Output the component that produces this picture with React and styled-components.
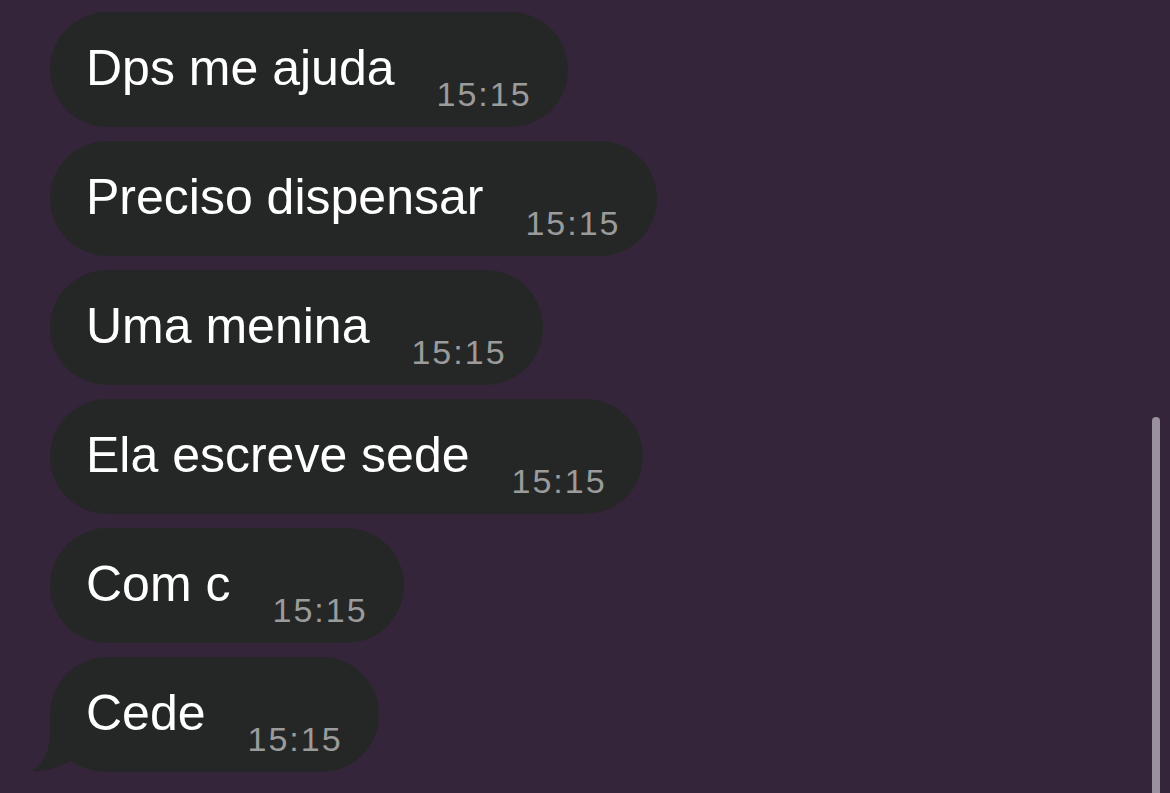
import React from 'react'
import styled, { createGlobalStyle } from 'styled-components'

const GlobalStyle = createGlobalStyle`
  html, body {
    margin: 0;
    padding: 0;
    background: #35253a;
    overflow: hidden;
  }
  body {
    font-family: "Liberation Sans", Arial, sans-serif;
  }
`

const messages = [
  'Dps me ajuda',
  'Preciso dispensar',
  'Uma menina',
  'Ela escreve sede',
  'Com c',
  'Cede',
]

const Chat = () => (
  <Screen>
    <GlobalStyle />
    <Thread>
      {messages.map((text, i) => (
        <Bubble key={i} $last={i === messages.length - 1}>
          <Text>{text}</Text>
          <Time>15:15</Time>
          {i === messages.length - 1 && (
            <Tail viewBox="0 0 80 60" width="80" height="60">
              <path d="M20 0 L20 22 C20 40 12 52 2 59 C16 60 30 55 40 49 C50 55 60 59 80 60 L80 0 Z" fill="#252727" />
            </Tail>
          )}
        </Bubble>
      ))}
    </Thread>
    <Scrollbar />
  </Screen>
)

const Screen = styled.main`
  position: relative;
  width: 1170px;
  height: 793px;
  background: #35253a;
  overflow: hidden;
`

const Thread = styled.div`
  display: flex;
  flex-direction: column;
  align-items: flex-start;
  gap: 14px;
  padding: 12px 0 0 50px;
`

const Bubble = styled.div`
  position: relative;
  display: flex;
  align-items: flex-start;
  gap: 42px;
  height: 115px;
  box-sizing: border-box;
  padding: 0 36px;
  background: #252727;
  border-radius: 58px;
`

const Text = styled.span`
  position: relative;
  z-index: 1;
  margin-top: 31px;
  font-size: 50px;
  line-height: 50px;
  color: #ffffff;
  white-space: nowrap;
`

const Time = styled.span`
  margin-top: 65px;
  font-size: 34px;
  line-height: 34px;
  letter-spacing: 2px;
  color: #9b9b9b;
  white-space: nowrap;
`

const Tail = styled.svg`
  position: absolute;
  left: -20px;
  bottom: 0;
`

const Scrollbar = styled.div`
  position: absolute;
  right: 10px;
  top: 417px;
  bottom: -10px;
  width: 8px;
  border-radius: 4px;
  background: #9b90a0;
`

export default Chat
